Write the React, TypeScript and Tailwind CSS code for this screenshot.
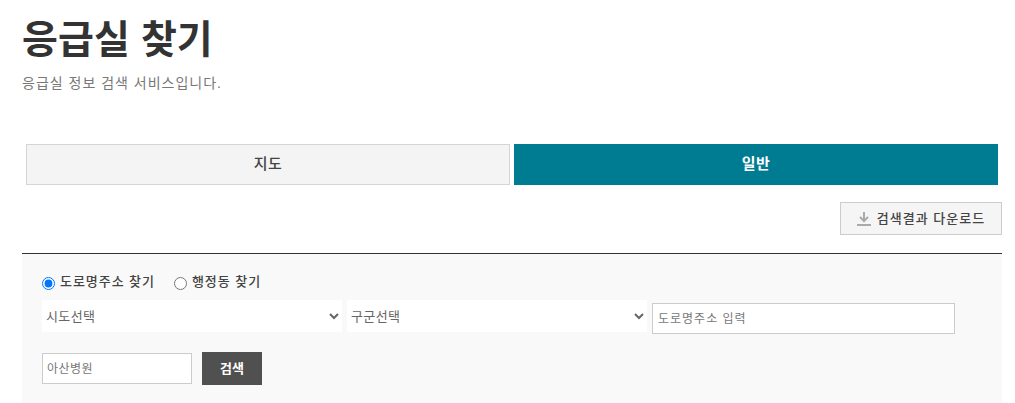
import React, { useState } from 'react'

const font = "font-['Liberation_Sans','Noto_Sans_CJK_KR',sans-serif]"

const App: React.FC = () => {
  const [tab, setTab] = useState('general')
  const [addressType, setAddressType] = useState('road')

  return (
    <div className={`${font} h-[403px] w-[1015px] overflow-hidden bg-white pl-[22px] pr-[13px] text-[#333]`}>
      <header className="h-[144px] pt-[15px]">
        <h1 className="text-[39px] leading-[50px] font-bold tracking-[0.1px] text-[#333]">응급실 찾기</h1>
        <p className="mt-[8px] text-[14px] leading-[20px] tracking-[1px] text-[#777]">응급실 정보 검색 서비스입니다.</p>
      </header>

      {/* Tabs */}
      <div className="flex gap-1 px-1">
        <button
          onClick={() => setTab('map')}
          className="h-[41px] w-[484px] border border-[#d5d5d5] bg-[#f4f4f4] text-[15px] font-medium tracking-[0.5px] text-[#444]"
        >
          지도
        </button>
        <button
          onClick={() => setTab('general')}
          className="h-[41px] w-[484px] bg-[#007c92] text-[15px] font-bold tracking-[0.5px] text-white"
        >
          일반
        </button>
      </div>

      <div className="mt-[17px] flex justify-end">
        <button className="flex h-[33px] w-[162px] items-center justify-center gap-[6px] border border-[#ccc] bg-[#f5f5f5] text-[13px] font-medium tracking-[1px] text-[#444]">
          <svg width="14" height="14" viewBox="0 0 14 14" fill="none" stroke="#aaa" strokeWidth="2">
            <path d="M7 0V8.5" />
            <path d="M3 5L7 9L11 5" />
            <path d="M0 13H14" />
          </svg>
          검색결과 다운로드
        </button>
      </div>

      {/* Search form */}
      <section className="mt-[18px] h-[150px] border-t border-[#333] bg-[#f9f9f9] px-5 pt-[18px]">
        <div className="flex h-[20px] items-center text-[13px] font-medium tracking-[0.95px] text-[#444]">
          <label className="flex items-center gap-[5px]">
            <input
              type="radio"
              name="addressType"
              checked={addressType === 'road'}
              onChange={() => setAddressType('road')}
              className="m-0 h-[13px] w-[13px] translate-y-[1px]"
            />
            도로명주소 찾기
          </label>
          <label className="ml-[19px] flex items-center gap-[5px]">
            <input
              type="radio"
              name="addressType"
              checked={addressType === 'admin'}
              onChange={() => setAddressType('admin')}
              className="m-0 h-[13px] w-[13px] translate-y-[1px]"
            />
            행정동 찾기
          </label>
        </div>

        <div className="mt-[8px] flex items-center gap-[5px]">
          <select className="h-[32px] w-[300px] bg-white text-[13px] tracking-[0.4px] text-[#666]">
            <option>시도선택</option>
          </select>
          <select className="h-[32px] w-[300px] bg-white text-[13px] tracking-[0.4px] text-[#666]">
            <option>구군선택</option>
          </select>
          <input
            placeholder="도로명주소 입력"
            className="h-[31px] w-[303px] translate-y-[2px] border border-[#ccc] bg-white px-[5px] pt-[2px] text-[12px] tracking-[1px] placeholder:text-[#777]"
          />
        </div>

        <div className="mt-[20px] flex items-center gap-[10px]">
          <input
            placeholder="아산병원"
            className="h-[31px] w-[150px] border border-[#ccc] bg-white px-[4px] pt-[1px] text-[12px] tracking-[0.5px] placeholder:text-[#777]"
          />
          <button className="h-[33px] w-[60px] bg-[#505050] text-[13px] font-bold text-white">검색</button>
        </div>
      </section>
    </div>
  )
}

export default App
